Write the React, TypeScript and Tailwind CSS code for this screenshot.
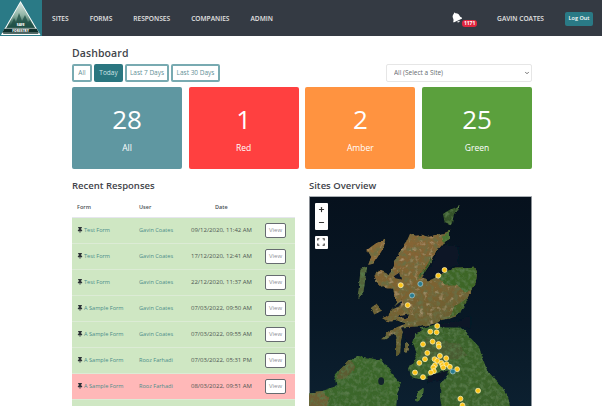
import React from "react";
import { FaBell, FaThumbtack } from "react-icons/fa";
import { ChevronDown, Plus, Minus } from "lucide-react";

const rows = [
  ["Test Form", "Gavin Coates", "09/12/2020, 11:42 AM", "g"],
  ["Test Form", "Gavin Coates", "17/12/2020, 12:41 AM", "g"],
  ["Test Form", "Gavin Coates", "22/12/2020, 11:37 AM", "g"],
  ["A Sample Form", "Gavin Coates", "07/03/2022, 09:50 AM", "g"],
  ["A Sample Form", "Gavin Coates", "07/03/2022, 09:55 AM", "g"],
  ["A Sample Form", "Rooz Farhadi", "07/03/2022, 05:31 PM", "g"],
  ["A Sample Form", "Rooz Farhadi", "08/03/2022, 09:51 AM", "r"],
];

const yellow = [[434,298],[415,315],[302,344],[323,404],[412,467],[391,484],[410,486],[369,522],[398,514],[416,521],[417,529],[382,548],[420,557],[439,564],[375,567],[358,578],[404,567],[412,572],[424,578],[428,585],[440,582],[450,590],[472,597],[405,585],[400,592],[430,592],[402,603],[393,607],[345,607],[369,621],[535,662],[482,686],[488,706]];
const blue = [[361,340],[336,375],[459,604]];

const highlands = "101,37 107,39 113,38 120,40 128,38 136,36 141,34 141,42 134,46 129,52 124,60 120,68 113,78 120,84 129,80 136,75 146,72 156,72 165,71 168,78 167,86 163,94 159,101 154,108 150,115 147,120 140,122 132,124 126,127 112,130 100,132 94,136 92,143 91,158 87,160 87,143 85,137 76,143 72,143 78,137 87,131 97,127 88,124 80,125 73,122 80,117 84,112 88,106 86,100 84,92 78,92 72,90 66,84 64,79 70,74 76,76 80,78 84,72 86,64 90,60 92,52 97,46";
const south = "103,131 113,132 126,128 140,127 147,128 155,134 162,142 170,150 174,162 178,173 186,183 193,190 200,202 202,213 133,213 131,200 132,188 140,177 130,178 122,181 115,184 102,181 100,172 108,158 103,144";

function Logo() {
  return (
    <div className="w-[42px] h-9 bg-[#2a7a86] shrink-0">
      <svg viewBox="0 0 42 36" className="w-[42px] h-9">
        <defs>
          <linearGradient id="lg" x1="0" y1="0" x2="0" y2="1">
            <stop offset="0" stopColor="#dbe8e2" />
            <stop offset="0.4" stopColor="#8fb3a4" />
            <stop offset="0.7" stopColor="#2d5f53" />
            <stop offset="1" stopColor="#173a35" />
          </linearGradient>
        </defs>
        <polygon points="20.5,1 40.5,35 1,35" fill="#fff" />
        <polygon points="20.5,2.6 38.6,34 2.9,34" fill="url(#lg)" />
        <polygon points="11,25 14,18 16,22 19,13 22,21 25,15 28,22 30,20 33,27 8,27" fill="#1d4d44" opacity="0.75" />
        <polygon points="4.5,28.4 36.6,28.4 39,33 2.2,33" fill="#10302c" />
        <path d="M4.5 28.4H36.6M2.2 33H39" stroke="#fff" strokeWidth="0.5" />
        <text x="20.7" y="25.8" textAnchor="middle" fontSize="3.3" fontWeight="800" fill="#fff" fontFamily="'Open Sans', sans-serif">SAFE</text>
        <text x="20.7" y="32" textAnchor="middle" fontSize="3.3" fontWeight="800" fill="#fff" fontFamily="'Open Sans', sans-serif">FORESTRY</text>
      </svg>
    </div>
  );
}

function MapArt() {
  return (
    <svg viewBox="0 0 223 210" className="block w-full h-full">
      <defs>
        <filter id="texA" filterUnits="userSpaceOnUse" x="-6" y="-6" width="235" height="222">
          <feTurbulence type="fractalNoise" baseFrequency="0.13" numOctaves="4" seed="7" result="w" />
          <feDisplacementMap in="SourceGraphic" in2="w" scale="4" xChannelSelector="R" yChannelSelector="G" result="land" />
          <feTurbulence type="fractalNoise" baseFrequency="0.2" numOctaves="3" seed="11" result="n" />
          <feColorMatrix in="n" type="matrix" values="0 0 0 0 0.14  0 0 0 0 0.16  0 0 0 0 0.06  0 0 0 2.6 -1.05" result="dark" />
          <feComposite in="dark" in2="land" operator="in" result="darkc" />
          <feColorMatrix in="n" type="matrix" values="0 0 0 0 0.62  0 0 0 0 0.47  0 0 0 0 0.28  1.4 0 0 0 -0.8" result="lite" />
          <feComposite in="lite" in2="land" operator="in" result="litec" />
          <feMerge result="all">
            <feMergeNode in="land" />
            <feMergeNode in="darkc" />
            <feMergeNode in="litec" />
          </feMerge>
          <feGaussianBlur in="all" stdDeviation="0.45" />
        </filter>
        <filter id="texB" filterUnits="userSpaceOnUse" x="-6" y="-6" width="235" height="222">
          <feTurbulence type="fractalNoise" baseFrequency="0.13" numOctaves="4" seed="7" result="w" />
          <feDisplacementMap in="SourceGraphic" in2="w" scale="4" xChannelSelector="R" yChannelSelector="G" result="land" />
          <feTurbulence type="fractalNoise" baseFrequency="0.25" numOctaves="3" seed="3" result="n" />
          <feColorMatrix in="n" type="matrix" values="0 0 0 0 0.1  0 0 0 0 0.2  0 0 0 0 0.07  0 0 0 2.2 -0.9" result="dark" />
          <feComposite in="dark" in2="land" operator="in" result="darkc" />
          <feMerge result="all">
            <feMergeNode in="land" />
            <feMergeNode in="darkc" />
          </feMerge>
          <feGaussianBlur in="all" stdDeviation="0.45" />
        </filter>
        <filter id="texS" filterUnits="userSpaceOnUse" x="-6" y="-6" width="235" height="222">
          <feTurbulence type="fractalNoise" baseFrequency="0.18" numOctaves="3" seed="5" result="w" />
          <feDisplacementMap in="SourceGraphic" in2="w" scale="3" xChannelSelector="R" yChannelSelector="G" />
          <feGaussianBlur stdDeviation="0.4" />
        </filter>
        <linearGradient id="hl" x1="0" y1="0" x2="0.3" y2="1">
          <stop offset="0" stopColor="#8a6636" />
          <stop offset="0.6" stopColor="#7a6232" />
          <stop offset="1" stopColor="#5f5c2e" />
        </linearGradient>
        <linearGradient id="sea" x1="0" y1="0" x2="0" y2="1">
          <stop offset="0" stopColor="#06111d" />
          <stop offset="0.6" stopColor="#081826" />
          <stop offset="1" stopColor="#0c2030" />
        </linearGradient>
      </defs>
      <rect width="223" height="210" fill="url(#sea)" />
      <g filter="url(#texA)">
        <polygon points={highlands} fill="url(#hl)" />
        <polygon points="58,53 66,47 76,42 75,50 72,55 64,67 59,68 62,60" fill="#8a6a38" />
        <polygon points="62,112 68,108 73,114 65,118" fill="#6d5e32" />
        <polygon points="96,146 100,147 100,154 96,156" fill="#6a5f33" />
      </g>
      <g filter="url(#texB)">
        <polygon points={south} fill="#3a6229" />
        <polygon points="146,72 165,71 168,78 167,86 163,94 156,96 148,88 136,88 130,82 136,75" fill="#3c6628" />
        <polygon points="132,40 141,34 141,42 134,46" fill="#4a7430" />
        <polygon points="112,76 119,66 122,60 122,64 114,78 108,84" fill="#3b5a27" />
        <polygon points="155,104 159,101 151,117 138,122 146,110" fill="#466228" />
        <polygon points="118,140 150,148 158,160 134,166 112,160" fill="#4a5c30" />
        <polygon points="51,72 58,70 56,83 54,97 48,103 50,88" fill="#52643a" />
        <polygon points="134,17 142,12 151,8 146,18 143,30 136,26" fill="#35522a" />
        <polygon points="30,174 40,164 50,160 62,162 73,164 84,178 92,187 88,197 87,213 -4,213 -4,197 13,195 27,190 25,180" fill="#3a662b" />
        <polygon points="-4,197 13,195 20,203 15,213 -4,213" fill="#6e5e34" />
        <polygon points="30,174 40,164 46,170 38,182 28,184" fill="#5c5c30" />
        <polygon points="106,203 110,196 115,192 114,199 108,206" fill="#456d32" />
      </g>
      <g filter="url(#texS)" fill="#081826">
        <polygon points="136,48 128,54 124,66 113,81 120,83 130,77 137,72 150,68 150,50" />
        <polygon points="162,119 150,124 128,128 136,131 150,131 162,132" />
        <polygon points="92,131 108,130 114,133 105,140 102,150 97,144" />
        <polygon points="120,179 140,174 134,184 118,187" />
        <polygon points="93,104 81,113 90,110" />
        <polygon points="90,76 83,81 92,83" />
        <polygon points="100,118 88,120 98,122" />
      </g>
      <ellipse cx="72" cy="185" rx="3" ry="4" fill="#13232b" />
      {yellow.map(([x, y], i) => (
        <circle key={i} cx={x / 3 - 9} cy={y / 3 - 26} r="2.5" fill="#fbc417" stroke="#fff3c4" strokeWidth="0.7" />
      ))}
      {blue.map(([x, y], i) => (
        <circle key={i} cx={x / 3 - 9} cy={y / 3 - 26} r="2.5" fill="#2b7d90" stroke="#a9cdd3" strokeWidth="0.7" />
      ))}
    </svg>
  );
}

export default function App() {
  return (
    <div className="h-[406px] overflow-hidden bg-white text-[#3f444a] font-['Open_Sans','Noto_Sans',sans-serif]">
      <header className="h-9 bg-[#343a43] flex items-center text-[#e4e4e4] text-[6.6px] font-semibold">
        <Logo />
        <nav className="flex ml-[10px] gap-[21px] pt-[1px]">
          <span>SITES</span>
          <span>FORMS</span>
          <span>RESPONSES</span>
          <span>COMPANIES</span>
          <span>ADMIN</span>
        </nav>
        <div className="ml-auto flex items-center mr-[9px] pt-[1px]">
          <div className="relative w-[15px] h-[14px] mr-[33px]">
            <FaBell className="text-white w-[11px] h-[11px] ml-[2px] -rotate-[25deg]" />
            <span className="absolute left-[13px] top-[8px] w-[15px] h-[7px] rounded-[3px] bg-[#e0263f] text-white text-[5px] font-bold leading-[7px] text-center">1171</span>
          </div>
          <span className="mr-[21px]">GAVIN COATES</span>
          <button className="w-[28px] h-[14px] bg-[#2a7a86] rounded-[2px] text-white text-[5.5px] font-semibold">Log Out</button>
        </div>
      </header>

      <main className="w-[460px] ml-[72px]">
        <h1 className="text-[10.5px] font-semibold leading-[14px] mt-[10px] tracking-[0.1px]">Dashboard</h1>
        <div className="flex items-center justify-between mt-[4px]">
          <div className="flex gap-[2px] text-[6.5px] text-[#5f8f97]">
            <button className="w-5 h-[18px] rounded-[2px] border-2 border-[#78aab1]">All</button>
            <button className="w-[29px] h-[18px] rounded-[2px] border-2 border-[#2a7680] bg-[#2a7680] text-[#cfe3e6]">Today</button>
            <button className="w-[44px] h-[18px] rounded-[2px] border-2 border-[#78aab1]">Last 7 Days</button>
            <button className="w-[49px] h-[18px] rounded-[2px] border-2 border-[#78aab1]">Last 30 Days</button>
          </div>
          <div className="relative w-[146px] h-[18px]">
            <select className="block w-full h-full appearance-none bg-white border border-[#e6e6e6] rounded-[2px] pl-[7px] text-[6.5px] text-[#666b70] outline-none">
              <option>All (Select a Site)</option>
            </select>
            <ChevronDown className="absolute right-[2px] top-[6px] w-[6px] h-[6px] text-[#444]" strokeWidth={3} />
          </div>
        </div>

        <div className="grid grid-cols-4 gap-[6.67px] mt-[5px] text-white text-center">
          {[
            ["28", "All", "bg-[#5f97a1]"],
            ["1", "Red", "bg-[#ff4040]"],
            ["2", "Amber", "bg-[#ff9340]"],
            ["25", "Green", "bg-[#5ba03d]"],
          ].map(([n, l, c]) => (
            <div key={l} className={`h-[82px] rounded-[2px] flex flex-col items-center pt-[14px] ${c}`}>
              <div className="text-[26px] leading-9">{n}</div>
              <div className="text-[8.5px] leading-3 mt-[5px]">{l}</div>
            </div>
          ))}
        </div>

        <div className="flex justify-between mt-[10px]">
          <section className="w-[223px]">
            <h2 className="text-[9.5px] font-semibold leading-[13px]">Recent Responses</h2>
            <div className="grid grid-cols-[62px_52px_75px_1fr] items-center h-[21px] mt-[5px] pl-[5px] text-[5.5px] font-semibold text-[#4a4f55] border-b border-[#e6e6ee]">
              <span>Form</span>
              <span>User</span>
              <span className="pl-[24px]">Date</span>
              <span />
            </div>
            {rows.map(([form, user, date, k], i) => (
              <div
                key={i}
                className={`grid grid-cols-[62px_52px_75px_1fr] items-center h-[26px] pl-[5px] text-[5.6px] border-b border-[#dcebd5] ${k === "r" ? "bg-[#ffb8b8]" : "bg-[#cfe7c3]"}`}
              >
                <span className="flex items-center gap-[1px] text-[#4b8d8a]">
                  <FaThumbtack className="w-[6px] h-[6px] text-[#2e3338]" />
                  {form}
                </span>
                <span className="text-[#4b8d8a]">{user}</span>
                <span className="text-[#4d5651] text-[6px]">{date}</span>
                <button className="w-[21px] h-[15px] ml-[-1px] bg-white border border-[#666b70] rounded-[2px] text-[6px] text-[#8a9096]">View</button>
              </div>
            ))}
            <div className="grid grid-cols-[189px_1fr] items-center h-[26px] pl-[5px] bg-[#cfe7c3]">
              <span />
              <span className="block w-[21px] h-[15px] ml-[-1px] bg-white border border-[#666b70] rounded-[2px]" />
            </div>
          </section>

          <section className="w-[223px]">
            <h2 className="text-[9.5px] font-semibold leading-[13px]">Sites Overview</h2>
            <div className="relative h-[210px] mt-[4px] border-t border-[#aab0b5]">
              <MapArt />
              <div className="absolute left-[5.5px] top-[5.5px] w-[13px] h-[27px] bg-white rounded-[1px] flex flex-col items-center justify-around text-[#333]">
                <Plus className="w-[7px] h-[7px]" strokeWidth={4} />
                <Minus className="w-[7px] h-[7px]" strokeWidth={4} />
              </div>
              <div className="absolute left-[5.5px] top-[38.5px] w-[13px] h-[13px] bg-white rounded-[1px] flex items-center justify-center">
                <svg viewBox="0 0 10 10" className="w-2 h-2" fill="none" stroke="#333" strokeWidth="1.4">
                  <path d="M1 3V1h2M7 1h2v2M9 7v2H7M3 9H1V7" />
                </svg>
              </div>
            </div>
          </section>
        </div>
      </main>
    </div>
  );
}
